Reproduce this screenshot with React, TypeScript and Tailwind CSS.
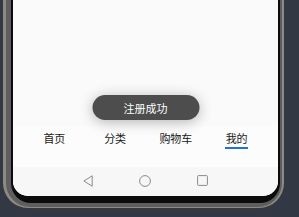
const tabs = ['首页', '分类', '购物车', '我的'];

export default function App() {
  return (
    <div className="w-[299px] h-[217px] overflow-hidden bg-[#323844]" style={{ fontFamily: '"Noto Sans CJK SC", "Noto Sans", sans-serif' }}>
      {/* phone frame */}
      <div className="ml-[2px] mt-[-30px] w-[283px] rounded-b-[26px] bg-[#3c3a38] pl-[1px] pr-[1px] pb-[1px]">
        <div className="rounded-b-[25px] bg-[#8c8a88] pl-[3px] pr-[2px] pb-[1px]">
          <div className="rounded-b-[24px] bg-[#5e5e5e] pl-[5px] pr-[2px] pb-[4px]">
            <div className="rounded-b-[20px] bg-[#0c0c0c] pl-[2px] pr-[2px] pb-[7px]">
              <div className="relative flex h-[226px] flex-col overflow-hidden rounded-b-[15px] bg-[#fafafa]">
                <div className="flex-1" />

                {/* tab bar */}
                <div className="flex h-[41px] items-start bg-[#fcfcfc] px-[11px] pt-[6px]">
                  {tabs.map((t, i) => (
                    <div key={t} className="flex flex-1 justify-center">
                      <div className="flex flex-col items-center">
                        <span className="text-[11px] leading-[12px] text-[#1a1a1a]">{t}</span>
                        {i === 3 && <div className="mt-[3px] h-[2px] w-[23px] bg-[#1f6fe0]" />}
                      </div>
                    </div>
                  ))}
                </div>

                {/* system nav bar */}
                <div className="flex h-[29px] items-center justify-center gap-[46px] bg-[#f7f7f7] pb-[2px]">
                  <svg width="10" height="12" viewBox="0 0 10 12">
                    <path d="M9.2 0.8 L0.9 6 L9.2 11.2 Z" fill="none" stroke="#8a8a8a" strokeWidth="1" strokeLinejoin="round" />
                  </svg>
                  <svg width="12" height="12" viewBox="0 0 12 12">
                    <circle cx="6" cy="6" r="5.4" fill="none" stroke="#8a8a8a" strokeWidth="1" />
                  </svg>
                  <svg width="11" height="11" viewBox="0 0 11 11">
                    <rect x="0.6" y="0.6" width="9.8" height="9.8" rx="0.8" fill="none" stroke="#8a8a8a" strokeWidth="1" />
                  </svg>
                </div>

                {/* toast */}
                <div className="absolute left-1/2 top-[125px] flex h-[25px] w-[107px] -translate-x-1/2 items-center justify-center rounded-full bg-[#4d4d4d] shadow-[0_2px_14px_rgba(0,0,0,0.28)]">
                  <span className="text-[11px] leading-[12px] text-white">注册成功</span>
                </div>
              </div>
            </div>
          </div>
        </div>
      </div>
    </div>
  );
}
